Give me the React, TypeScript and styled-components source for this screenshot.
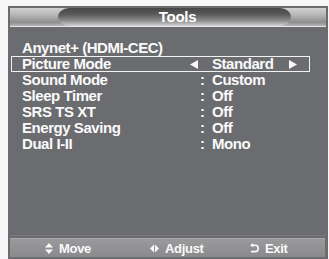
import React from 'react';
import styled, { createGlobalStyle } from 'styled-components';

const GlobalStyle = createGlobalStyle`
  html, body {
    margin: 0;
    padding: 0;
    background: #f7f7f7;
  }
  body {
    font-family: "Liberation Sans", Arial, sans-serif;
  }
`;

const Page = styled.div`
  padding: 6px 1px 0 8px;
`;

const Screen = styled.div`
  width: 320px;
  height: 253px;
  box-sizing: border-box;
  padding: 2px;
  background: #6b6c70;
  display: flex;
  flex-direction: column;
  color: #fafafa;
  font-weight: 700;
`;

const Header = styled.div`
  height: 18px;
  display: flex;
  align-items: stretch;
  background: linear-gradient(to bottom, #d2d2d2 0%, #b4b4b4 40%, #8e8e8e 80%, #b8b8b8 100%);
  border-bottom: 1px solid #e4e4e4;
`;

const Pill = styled.div`
  margin-left: 48px;
  width: 227px;
  border-radius: 11px / 9px;
  background: linear-gradient(to bottom, #464646 0%, #5a5a5a 35%, #8c8c8c 70%, #d4d4d4 100%);
  display: flex;
  align-items: center;
  justify-content: center;
  font-size: 15px;
  letter-spacing: -0.3px;
  line-height: 18px;
  color: #ffffff;
  padding-left: 6px;
`;

const Menu = styled.div`
  margin: 13px 0 0 1px;
  width: 299px;
  display: flex;
  flex-direction: column;
`;

const Row = styled.div<{ $selected?: boolean }>`
  display: grid;
  grid-template-columns: 168px 22px 76px auto;
  align-items: center;
  height: 16px;
  box-sizing: border-box;
  padding-left: 10px;
  border: 1px solid ${(p) => (p.$selected ? '#f2f2f2' : 'transparent')};
  font-size: 15px;
  letter-spacing: -0.45px;
  line-height: 14px;
  white-space: nowrap;
`;

const Marker = styled.span`
  display: flex;
  align-items: center;
  padding-left: 10px;
`;

const ArrowCell = styled.span`
  display: flex;
  align-items: center;
`;

const Spacer = styled.div`
  flex: 1;
  border-bottom: 1px solid #7a7b7e;
  margin-bottom: 2px;
`;

const Footer = styled.div`
  height: 19px;
  margin-right: 1px;
  box-sizing: border-box;
  display: grid;
  grid-template-columns: 105px 100px auto;
  align-items: center;
  padding-left: 35px;
  background: linear-gradient(to bottom, #9a9a9c 0%, #8a8a8c 100%);
  border-top: 1px solid #a8a8aa;
  font-size: 13px;
  letter-spacing: -0.3px;
`;

const FooterItem = styled.span`
  display: flex;
  align-items: center;
  gap: 6px;
`;

const LeftTri = ({ size = 9 }: { size?: number }) => (
  <svg width={size} height={size} viewBox="0 0 9 9">
    <polygon points="0,4.5 8,0 8,9" fill="#fafafa" />
  </svg>
);

const RightTri = ({ size = 9 }: { size?: number }) => (
  <svg width={size} height={size} viewBox="0 0 9 9">
    <polygon points="1,0 9,4.5 1,9" fill="#fafafa" />
  </svg>
);

const MoveIcon = () => (
  <svg width="8" height="11" viewBox="0 0 8 11">
    <polygon points="4,0 8,4.6 0,4.6" fill="#fafafa" />
    <polygon points="0,6.4 8,6.4 4,11" fill="#fafafa" />
  </svg>
);

const AdjustIcon = () => (
  <svg width="9" height="9" viewBox="0 0 9 9">
    <polygon points="0,4.5 4,0.5 4,8.5" fill="#fafafa" />
    <polygon points="5,0.5 9,4.5 5,8.5" fill="#fafafa" />
  </svg>
);

const ExitIcon = () => (
  <svg width="9" height="10" viewBox="0 0 9 10">
    <path d="M2.5 2.2 H5 A3 3 0 0 1 5 8.6 H1" fill="none" stroke="#fafafa" strokeWidth="1.6" />
    <polygon points="0,2.2 3.2,0 3.2,4.4" fill="#fafafa" />
  </svg>
);

const items = [
  { label: 'Anynet+ (HDMI-CEC)', value: '' },
  { label: 'Picture Mode', value: 'Standard', selected: true },
  { label: 'Sound Mode', value: 'Custom' },
  { label: 'Sleep Timer', value: 'Off' },
  { label: 'SRS TS XT', value: 'Off' },
  { label: 'Energy Saving', value: 'Off' },
  { label: 'Dual I-II', value: 'Mono' },
];

export default function App() {
  return (
    <>
      <GlobalStyle />
      <Page>
        <Screen>
          <Header>
            <Pill>Tools</Pill>
          </Header>
          <Menu>
            {items.map((it) => (
              <Row key={it.label} $selected={it.selected}>
                <span>{it.label}</span>
                {it.selected ? (
                  <ArrowCell>
                    <LeftTri />
                  </ArrowCell>
                ) : (
                  <Marker>{it.value ? ':' : ''}</Marker>
                )}
                <span>{it.value}</span>
                {it.selected ? (
                  <ArrowCell>
                    <RightTri />
                  </ArrowCell>
                ) : (
                  <span />
                )}
              </Row>
            ))}
          </Menu>
          <Spacer />
          <Footer>
            <FooterItem>
              <MoveIcon />
              Move
            </FooterItem>
            <FooterItem>
              <AdjustIcon />
              Adjust
            </FooterItem>
            <FooterItem>
              <ExitIcon />
              Exit
            </FooterItem>
          </Footer>
        </Screen>
      </Page>
    </>
  );
}
